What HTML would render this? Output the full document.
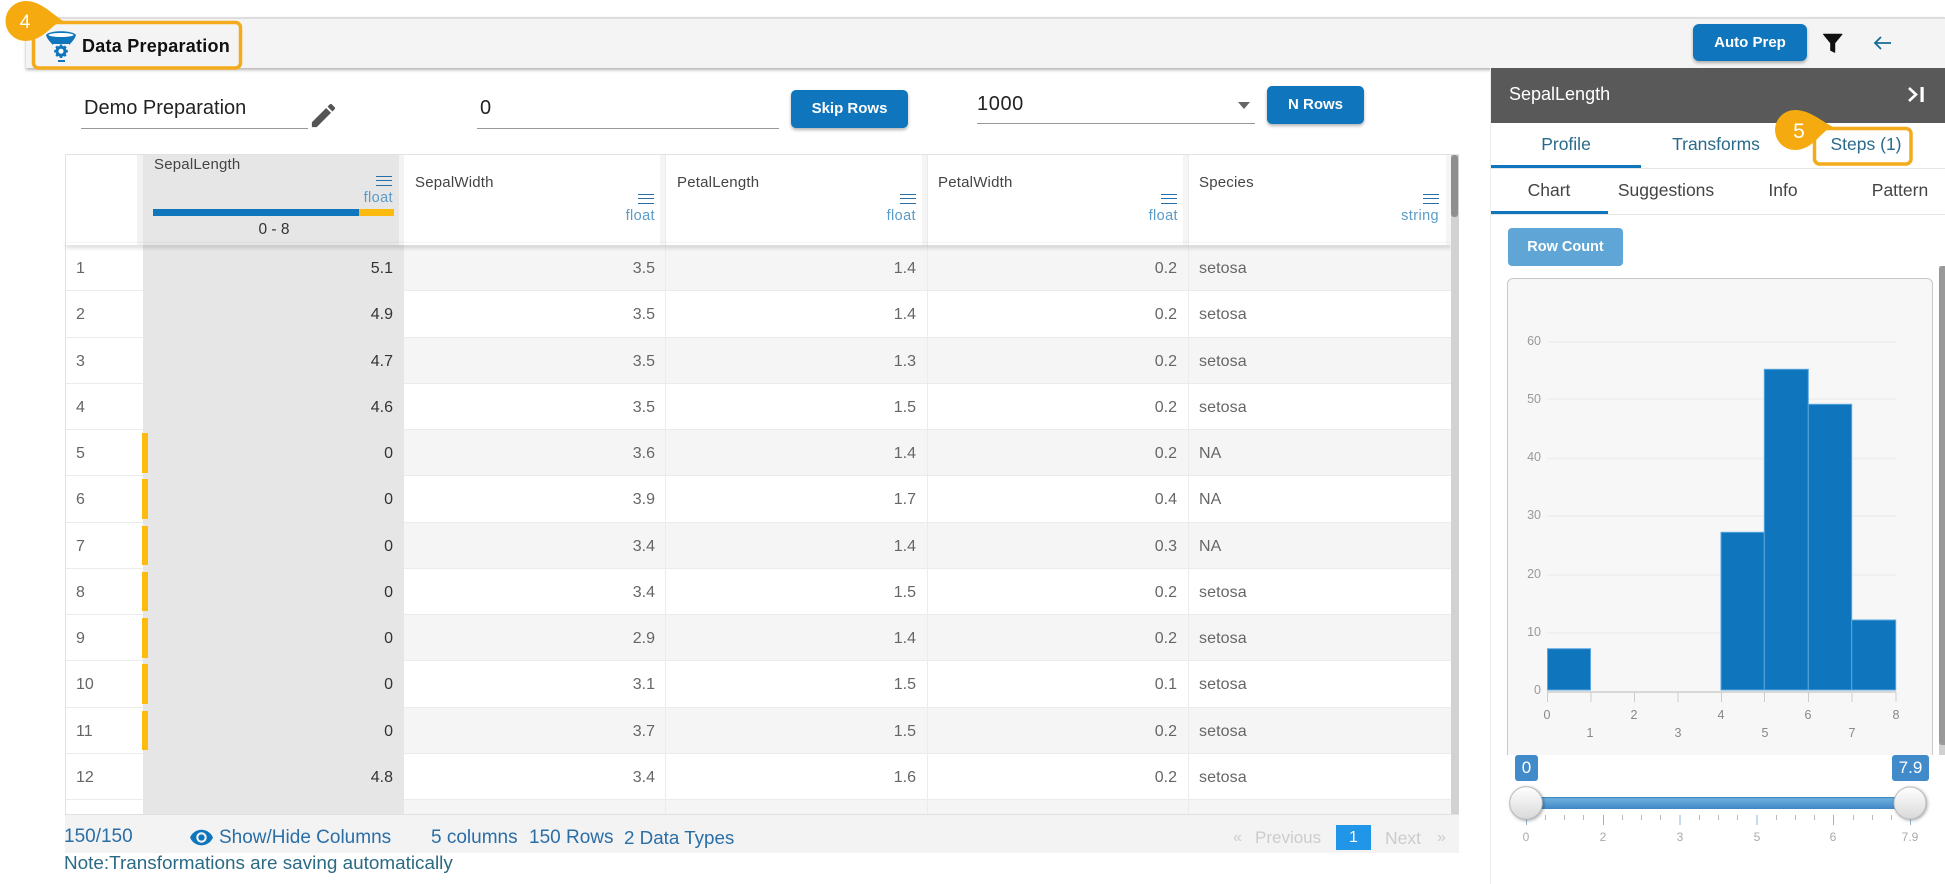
<!DOCTYPE html>
<html lang="en">
<head>
<meta charset="utf-8">
<title>Data Preparation</title>
<style>
html,body{margin:0;padding:0;width:1945px;height:884px;overflow:hidden;background:#fff;font-family:"Liberation Sans",sans-serif;color:#333}
*{box-sizing:border-box}
.a{position:absolute}
.t{position:absolute;white-space:nowrap;line-height:20px}
.btn{position:absolute;background:#0f75bc;color:#fff;border-radius:5px;text-align:center;font-weight:bold;font-size:15px;box-shadow:0 2px 3px rgba(0,0,0,.3)}
.ul{position:absolute;height:1px;background:#999}
.row{position:absolute;left:66px;width:1385px;height:46.25px;border-bottom:1px solid #ebebeb;font-size:16px;line-height:48px;color:#666}
.row.o{background:linear-gradient(90deg,#fff 338px,#f5f5f5 338px)}
.row span{position:absolute;top:0;white-space:nowrap}
.n{left:10px}
.c1{right:1058px;color:#333}
.c2{right:796px}
.c3{right:535px}
.c4{right:274px}
.s{left:1133px;letter-spacing:.1px}
.m{position:absolute;left:76px;width:6px;top:3px;height:39.5px;background:#fdbb0f}
.g{position:absolute;left:77px;width:261px;top:0;bottom:-1px;background:#e6e6e6}
.v{position:absolute;top:155px;width:1px;height:659px;background:#ececec}
.hn{font-size:15px;color:#444;letter-spacing:.2px}
.ft{font-size:14.5px;color:#5a9bc8;letter-spacing:.4px}
.f{font-size:19px;color:#2a6ea6}
.ham{position:absolute;width:16px;height:10px;border-top:1.5px solid #2a6ea6;border-bottom:1.5px solid #2a6ea6}
.ham:after{content:"";position:absolute;left:0;right:0;top:2.75px;height:1.5px;background:#2a6ea6}
.tab{font-size:17.5px;color:#2a6a8a;transform:translateX(-50%)}
.sub{font-size:17.5px;color:#444;transform:translateX(-50%)}
</style>
</head>
<body>

<!-- top bar -->
<div class="a" style="left:26px;top:17px;width:1919px;height:51px;background:#f4f4f4;border-top:2px solid #dedede;box-shadow:0 2px 3px rgba(0,0,0,.3)"></div>
<svg class="a" style="left:0;top:0" width="260" height="80">
  <rect x="33.5" y="22.5" width="207" height="45.5" rx="5" fill="none" stroke="#f3ab1b" stroke-width="3.5"/>
  <path d="M26 1C40 1 50 12 63 21C52 23 44 41 25 41A20 20 0 0 1 26 1Z" fill="#f5ab0f"/>
  <text x="25" y="28" font-family="Liberation Sans" font-size="19" fill="#fff" text-anchor="middle">4</text>
  <path d="M46 35C49 30 73 30 76 35C75 39 71 43 68 46H54C51 43 47 39 46 35Z" fill="#0f75bc"/>
  <ellipse cx="61" cy="35" rx="12.5" ry="2" fill="#fff"/>
  <path d="M53 44H69V46.500H53Z" fill="#f4f4f4"/>
  <path d="M61 44.500V58M54.200 51.200H67.800M56.200 46.400L65.800 56M65.800 46.400L56.200 56" stroke="#0f75bc" stroke-width="2.600"/>
  <circle cx="61" cy="51.200" r="5.500" fill="#0f75bc"/>
  <circle cx="61" cy="51.200" r="2.500" fill="#fff"/>
  <rect x="58" y="60" width="7" height="2" fill="#0f75bc"/>
</svg>
<div class="t" style="left:82px;top:36px;font-size:18px;font-weight:bold;color:#111;letter-spacing:.25px">Data Preparation</div>

<div class="btn" style="left:1693px;top:24px;width:114px;height:37px;line-height:37px;border-radius:6px">Auto Prep</div>
<svg class="a" style="left:1820px;top:30px" width="26" height="26"><path d="M3.5 4.2H22L14.7 13V22.3L10.7 20.3V13Z" fill="#111" stroke="#111" stroke-width="1" stroke-linejoin="round"/></svg>
<svg class="a" style="left:1870px;top:33px" width="26" height="20"><path d="M21 10H5M11 4L5 10L11 16" fill="none" stroke="#176a95" stroke-width="1.8"/></svg>

<!-- inputs row -->
<div class="t" style="left:84px;top:98px;font-size:20px;color:#222">Demo Preparation</div>
<div class="ul" style="left:81px;top:128px;width:227px"></div>
<svg class="a" style="left:308px;top:100px" width="31" height="31" viewBox="0 0 24 24"><path fill="#555" d="M3 17.25V21h3.75L17.81 9.94l-3.75-3.75L3 17.25zM20.71 7.04c.39-.39.39-1.02 0-1.41l-2.34-2.34c-.39-.39-1.02-.39-1.41 0l-1.83 1.83 3.75 3.75 1.83-1.83z"/></svg>
<div class="t" style="left:480px;top:98px;font-size:20px;color:#222">0</div>
<div class="ul" style="left:477px;top:128px;width:302px"></div>
<div class="btn" style="left:791px;top:90px;width:117px;height:38px;line-height:38px">Skip Rows</div>
<div class="t" style="left:977px;top:94px;font-size:20px;color:#222;letter-spacing:.6px">1000</div>
<div class="ul" style="left:977px;top:123px;width:278px"></div>
<div class="a" style="left:1238px;top:102px;border-left:6px solid transparent;border-right:6px solid transparent;border-top:7px solid #666"></div>
<div class="btn" style="left:1267px;top:86px;width:97px;height:38px;line-height:38px">N Rows</div>

<!-- table -->
<div class="a" style="left:65px;top:154px;width:1394px;height:660px;border:1px solid #e2e2e2;border-bottom:0"></div>
<div class="a" style="left:137px;top:155px;width:6px;height:90px;background:#f2f2f2"></div>
<div class="a" style="left:143px;top:155px;width:256px;height:90px;background:#e6e6e6"></div>
<div class="a" style="left:399px;top:155px;width:5px;height:90px;background:#f3f3f3"></div>
<div class="a" style="left:660px;top:155px;width:5px;height:90px;background:#f5f5f5"></div>
<div class="a" style="left:922px;top:155px;width:5px;height:90px;background:#f5f5f5"></div>
<div class="a" style="left:1183px;top:155px;width:5px;height:90px;background:#f5f5f5"></div>
<div class="a" style="left:1446px;top:155px;width:5px;height:90px;background:#f5f5f5"></div>

<div class="row o" style="top:245px"><div class="g"></div><span class="n">1</span><span class="c1">5.1</span><span class="c2">3.5</span><span class="c3">1.4</span><span class="c4">0.2</span><span class="s">setosa</span></div>
<div class="row" style="top:291.25px"><div class="g"></div><span class="n">2</span><span class="c1">4.9</span><span class="c2">3.5</span><span class="c3">1.4</span><span class="c4">0.2</span><span class="s">setosa</span></div>
<div class="row o" style="top:337.5px"><div class="g"></div><span class="n">3</span><span class="c1">4.7</span><span class="c2">3.5</span><span class="c3">1.3</span><span class="c4">0.2</span><span class="s">setosa</span></div>
<div class="row" style="top:383.75px"><div class="g"></div><span class="n">4</span><span class="c1">4.6</span><span class="c2">3.5</span><span class="c3">1.5</span><span class="c4">0.2</span><span class="s">setosa</span></div>
<div class="row o" style="top:430px"><div class="g"></div><div class="m"></div><span class="n">5</span><span class="c1">0</span><span class="c2">3.6</span><span class="c3">1.4</span><span class="c4">0.2</span><span class="s">NA</span></div>
<div class="row" style="top:476.25px"><div class="g"></div><div class="m"></div><span class="n">6</span><span class="c1">0</span><span class="c2">3.9</span><span class="c3">1.7</span><span class="c4">0.4</span><span class="s">NA</span></div>
<div class="row o" style="top:522.5px"><div class="g"></div><div class="m"></div><span class="n">7</span><span class="c1">0</span><span class="c2">3.4</span><span class="c3">1.4</span><span class="c4">0.3</span><span class="s">NA</span></div>
<div class="row" style="top:568.75px"><div class="g"></div><div class="m"></div><span class="n">8</span><span class="c1">0</span><span class="c2">3.4</span><span class="c3">1.5</span><span class="c4">0.2</span><span class="s">setosa</span></div>
<div class="row o" style="top:615px"><div class="g"></div><div class="m"></div><span class="n">9</span><span class="c1">0</span><span class="c2">2.9</span><span class="c3">1.4</span><span class="c4">0.2</span><span class="s">setosa</span></div>
<div class="row" style="top:661.25px"><div class="g"></div><div class="m"></div><span class="n">10</span><span class="c1">0</span><span class="c2">3.1</span><span class="c3">1.5</span><span class="c4">0.1</span><span class="s">setosa</span></div>
<div class="row o" style="top:707.5px"><div class="g"></div><div class="m"></div><span class="n">11</span><span class="c1">0</span><span class="c2">3.7</span><span class="c3">1.5</span><span class="c4">0.2</span><span class="s">setosa</span></div>
<div class="row" style="top:753.75px"><div class="g"></div><span class="n">12</span><span class="c1">4.8</span><span class="c2">3.4</span><span class="c3">1.6</span><span class="c4">0.2</span><span class="s">setosa</span></div>
<div class="row o" style="top:800px;height:14px;border:0"><div class="g"></div></div>

<div class="v" style="left:665px"></div>
<div class="v" style="left:927px"></div>
<div class="v" style="left:1188px"></div>

<!-- table head shadow -->
<div class="a" style="left:66px;top:243px;width:1385px;height:2px;box-shadow:0 2px 4px rgba(0,0,0,.3)"></div>

<!-- head content -->
<div class="t hn" style="left:154px;top:155px">SepalLength</div>
<div class="ham" style="left:376px;top:176px"></div>
<div class="t ft" style="right:1552px;top:188px">float</div>
<div class="a" style="left:153px;top:209px;width:206px;height:7px;background:#0f75bc"></div>
<div class="a" style="left:359px;top:209px;width:35px;height:7px;background:#fdbb0f"></div>
<div class="t" style="left:254px;top:220px;width:40px;text-align:center;font-size:15.5px;color:#333">0 - 8</div>

<div class="t hn" style="left:415px;top:173px">SepalWidth</div>
<div class="ham" style="left:638px;top:194px"></div>
<div class="t ft" style="right:1290px;top:206px">float</div>

<div class="t hn" style="left:677px;top:173px">PetalLength</div>
<div class="ham" style="left:900px;top:194px"></div>
<div class="t ft" style="right:1029px;top:206px">float</div>

<div class="t hn" style="left:938px;top:173px">PetalWidth</div>
<div class="ham" style="left:1161px;top:194px"></div>
<div class="t ft" style="right:767px;top:206px">float</div>

<div class="t hn" style="left:1199px;top:173px">Species</div>
<div class="ham" style="left:1423px;top:194px"></div>
<div class="t ft" style="right:506px;top:206px">string</div>

<!-- table scrollbar -->
<div class="a" style="left:1451px;top:155px;width:8px;height:659px;background:#d2d2d2"></div>
<div class="a" style="left:1451px;top:155px;width:7px;height:62px;background:#8f8f8f;border-radius:3px"></div>

<!-- footer -->
<div class="a" style="left:65px;top:814px;width:1394px;height:39px;background:#f3f3f3;border-top:1px solid #e0e0e0"></div>
<div class="t f" style="left:64px;top:827px">150/150</div>
<svg class="a" style="left:189px;top:825px" width="25" height="25" viewBox="0 0 24 24"><path fill="#0f75bc" d="M12 4.5C7 4.5 2.73 7.61 1 12c1.73 4.39 6 7.5 11 7.5s9.27-3.11 11-7.5c-1.73-4.39-6-7.5-11-7.5zM12 17c-2.76 0-5-2.24-5-5s2.24-5 5-5 5 2.24 5 5-2.24 5-5 5zm0-8c-1.66 0-3 1.34-3 3s1.34 3 3 3 3-1.34 3-3-1.34-3-3-3z"/></svg>
<div class="t f" style="left:219px;top:828px">Show/Hide Columns</div>
<div class="t f" style="left:431px;top:828px;letter-spacing:0">5 columns</div>
<div class="t f" style="left:529px;top:828px">150 Rows</div>
<div class="t f" style="left:624px;top:828px;font-size:18.8px">2 Data Types</div>
<div class="t" style="left:64px;top:854px;font-size:18.9px;color:#2b6a85">Note:Transformations are saving automatically</div>

<div class="t" style="left:1233px;top:828px;font-size:16px;color:#ccc">«</div>
<div class="t" style="left:1255px;top:828px;font-size:17px;color:#ccc">Previous</div>
<div class="a" style="left:1336px;top:825px;width:35px;height:25px;background:#2196e8;color:#fff;text-align:center;font-size:16px;line-height:26px">1</div>
<div class="t" style="left:1385px;top:828px;font-size:17.5px;color:#ccc">Next</div>
<div class="t" style="left:1437px;top:828px;font-size:16px;color:#ccc">»</div>

<!-- right panel -->
<div class="a" style="left:1490px;top:68px;width:1px;height:816px;background:#ececec"></div>
<div class="a" style="left:1491px;top:68px;width:454px;height:55px;background:#595959"></div>
<div class="t" style="left:1509px;top:84px;font-size:18px;color:#fff">SepalLength</div>
<svg class="a" style="left:1906px;top:85px" width="20" height="19"><path d="M3 3L10 9.5L3 16" fill="none" stroke="#fff" stroke-width="2.6"/><rect x="14.5" y="2" width="3.2" height="15" fill="#fff"/></svg>

<div class="t tab" style="left:1566px;top:134px">Profile</div>
<div class="t tab" style="left:1716px;top:134px">Transforms</div>
<div class="t tab" style="left:1866px;top:134px">Steps (1)</div>
<div class="a" style="left:1491px;top:168px;width:454px;height:1px;background:#e6e6e6"></div>
<div class="a" style="left:1491px;top:165px;width:150px;height:3px;background:#0f75bc"></div>

<div class="t sub" style="left:1549px;top:180px">Chart</div>
<div class="t sub" style="left:1666px;top:180px">Suggestions</div>
<div class="t sub" style="left:1783px;top:180px">Info</div>
<div class="t sub" style="left:1900px;top:180px">Pattern</div>
<div class="a" style="left:1491px;top:214px;width:454px;height:1px;background:#e6e6e6"></div>
<div class="a" style="left:1491px;top:211px;width:117px;height:3px;background:#0f75bc"></div>

<div class="a" style="left:1508px;top:228px;width:115px;height:38px;line-height:38px;background:#5fa5d5;color:#fff;border-radius:4px;text-align:center;font-weight:bold;font-size:14.5px">Row Count</div>

<div class="a" style="left:1507px;top:278px;width:426px;height:477px;background:#f7f7f7;border:1px solid #c8c8c8;border-bottom:0;border-radius:6px 6px 0 0"></div>

<!-- chart -->
<svg class="a" style="left:1500px;top:330px" width="440" height="420" font-family="Liberation Sans" font-size="12.5" fill="#999">
  <g stroke="#eeeeee" stroke-width="1.5">
    <path d="M47 12H396M47 69H396M47 128.5H396M47 186H396M47 245H396M47 303H396"/>
  </g>
  <g text-anchor="end">
    <text x="41" y="15">60</text><text x="41" y="73">50</text><text x="41" y="131">40</text><text x="41" y="189">30</text><text x="41" y="248">20</text><text x="41" y="306">10</text><text x="41" y="364">0</text>
  </g>
  <g fill="#0f75bc" stroke="#5aa7e0" stroke-width="1">
    <rect x="47.5" y="318.7" width="43" height="41.3"/>
    <rect x="221" y="202.3" width="43.3" height="157.7"/>
    <rect x="264.3" y="39.3" width="44" height="320.7"/>
    <rect x="308.3" y="74.3" width="43.4" height="285.7"/>
    <rect x="351.7" y="290" width="44" height="70"/>
  </g>
  <rect x="47" y="361" width="349" height="2" fill="#d8d8d8"/>
  <path d="M47.5 362V372M91 362V372M134.500 362V372M178 362V372M221.500 362V372M264.500 362V372M308.500 362V372M352 362V372M396 362V372" stroke="#ccc" stroke-width="1"/>
  <g text-anchor="middle" fill="#888">
    <text x="47" y="389">0</text><text x="134" y="389">2</text><text x="221" y="389">4</text><text x="308" y="389">6</text><text x="396" y="389">8</text>
    <text x="90" y="407">1</text><text x="178" y="407">3</text><text x="265" y="407">5</text><text x="352" y="407">7</text>
  </g>
</svg>

<!-- panel scrollbar -->
<div class="a" style="left:1939px;top:266px;width:6px;height:489px;background:#d0d0d0"></div>
<div class="a" style="left:1939px;top:266px;width:6px;height:479px;background:#999;border-radius:3px 0 0 3px"></div>

<!-- slider -->
<div class="a" style="left:1515px;top:755px;width:23px;height:26px;line-height:26px;background:#428bca;color:#fff;text-align:center;border-radius:3px;font-size:17px">0</div>
<div class="a" style="left:1892px;top:755px;width:37px;height:26px;line-height:26px;background:#428bca;color:#fff;text-align:center;border-radius:3px;font-size:17px">7.9</div>
<div class="a" style="left:1528px;top:797px;width:384px;height:12px;background:linear-gradient(#2f7fbe,#6caede 15%,#3f87c6);"></div>
<svg class="a" style="left:1500px;top:780px" width="445" height="70" font-family="Liberation Sans" font-size="12" fill="#aaa">
  <defs><linearGradient id="h" x1="0" y1="0" x2="0" y2="1"><stop offset="0" stop-color="#fff"/><stop offset="1" stop-color="#d9d9d9"/></linearGradient></defs>
  <g stroke="#bbb" stroke-width="1">
    <path d="M45.500 35V40M64.500 35V40M83.500 35V40M122.500 35V40M141.500 35V40M160.500 35V40M199.500 35V40M218.500 35V40M237.500 35V40M276.500 35V40M295.500 35V40M314.500 35V40M353.500 35V40M372.500 35V40M391.500 35V40"/>
  </g>
  <g stroke="#8db9dd" stroke-width="1">
    <path d="M26.500 35V45M103.500 35V45M180 35V45M257 35V45M333.500 35V45M410.500 35V45"/>
  </g>
  <g text-anchor="middle">
    <text x="26" y="61">0</text><text x="103" y="61">2</text><text x="180" y="61">3</text><text x="257" y="61">5</text><text x="333" y="61">6</text><text x="410" y="61">7.9</text>
  </g>
  <g fill="url(#h)" stroke="#bbb" stroke-width="1" style="filter:drop-shadow(1px 1px 1.5px rgba(0,0,0,.35))">
    <circle cx="26" cy="23" r="16.300"/>
    <circle cx="410" cy="23" r="16"/>
  </g>
</svg>

<!-- step callouts -->
<svg class="a" style="left:1770px;top:105px" width="150" height="65">
  <rect x="44.500" y="23.500" width="96.500" height="35.500" rx="5" fill="none" stroke="#f3ab1b" stroke-width="3.500"/>
  <path d="M25 5C39 5 50 15 63 22C52 24 44 45 25 45A20 20 0 0 1 25 5Z" fill="#f5ab0f"/>
  <text x="29" y="33" font-family="Liberation Sans" font-size="21" fill="#fff" text-anchor="middle">5</text>
</svg>

</body>
</html>
